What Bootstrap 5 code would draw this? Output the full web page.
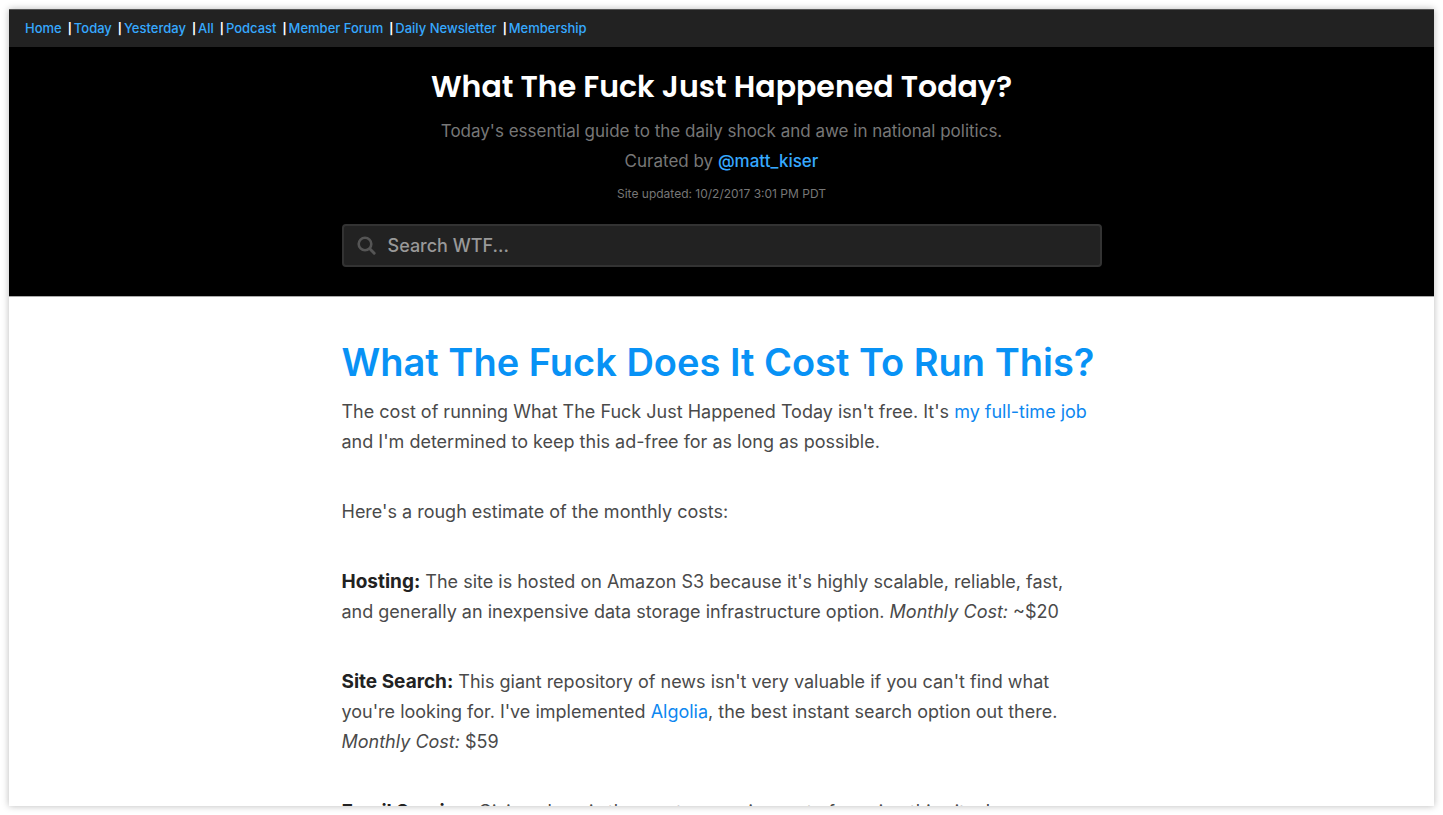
<!DOCTYPE html>
<html lang="en">
<head>
<meta charset="utf-8">
<meta name="viewport" content="width=device-width, initial-scale=1">
<title>What The Fuck Just Happened Today?</title>
<link href="https://cdn.jsdelivr.net/npm/bootstrap@5.3.0/dist/css/bootstrap.min.css" rel="stylesheet">
<style>
body{font-family:Inter,"Liberation Sans",sans-serif;background:#fff}
.stage{padding:9px}
.window{background:#fff;box-shadow:0 0 7px rgba(0,0,0,.28)}
a{text-decoration:none}
.topbar{background:#222;border-top:1px solid #555;font-size:13px;line-height:21px;padding:8px 16px;font-weight:500}
.topbar a,.masthead a{color:#36a9ff;font-weight:500}
.topbar li+li::before{content:"|";color:#fff;font-size:11px;font-weight:700;line-height:1;margin:0 2px 0 6px}
.masthead{background:#000;color:#777;border-bottom:1px solid #aaa;padding:20px 16px 29px}
.brand{font-family:Poppins,Inter,sans-serif;font-size:30px;line-height:40px;font-weight:600;color:#fff;margin-bottom:9px}
.tagline{font-size:17px;line-height:30px}
.updated{font-size:12px;line-height:20px;margin:8px 0 20px}
.column{max-width:760px}
.search-box{background:#222;border:2px solid #333;border-radius:4px;height:43px;color:#555;padding:0 13px;gap:12px}
.search-box input{color:#999;font-size:18px;font-weight:500;outline:0}
.search-box input::placeholder{color:#999;opacity:1}
.article{padding-top:40px;font-size:18px;line-height:30px;color:#4a4a4a}
.article h1{color:#0892f5;font-size:38px;line-height:50px;font-weight:600;margin-bottom:10px}
.article a{color:#0d87f0}
.article p{margin-bottom:40px;padding-right:8px}
.article strong{color:#222;font-weight:700;font-size:19px;line-height:1}
</style>
</head>
<body class="vh-100 overflow-hidden">
<div class="stage h-100">
<div class="window h-100 overflow-hidden">
<nav class="topbar" aria-label="Main">
<ul class="list-unstyled d-flex m-0">
<li><a href="#">Home</a></li><li><a href="#">Today</a></li><li><a href="#">Yesterday</a></li><li><a href="#">All</a></li><li><a href="#">Podcast</a></li><li><a href="#">Member Forum</a></li><li><a href="#">Daily Newsletter</a></li><li><a href="#">Membership</a></li>
</ul>
</nav>
<header class="masthead text-center">
<div class="brand">What The Fuck Just Happened Today?</div>
<p class="tagline m-0">Today's essential guide to the daily shock and awe in national politics.</p>
<p class="tagline m-0">Curated by <a href="#">@matt_kiser</a></p>
<p class="updated">Site updated: 10/2/2017 3:01 PM PDT</p>
<form class="column search-box mx-auto d-flex align-items-center" role="search">
<svg width="19" height="19" viewBox="0 0 19 19" fill="none" stroke="currentColor" aria-hidden="true"><circle cx="8" cy="8" r="6.3" stroke-width="2.6"/><path d="M12.8 12.8l4.4 4.4" stroke-width="2.9" stroke-linecap="round"/></svg>
<input class="border-0 bg-transparent flex-grow-1 p-0" type="text" placeholder="Search WTF..." aria-label="Search WTF">
</form>
</header>
<main class="article column mx-auto">
<h1>What The Fuck Does It Cost To Run This?</h1>
<p>The cost of running What The Fuck Just Happened Today isn't free. It's <a href="#">my full-time job</a> and I'm determined to keep this ad-free for as long as possible.</p>
<p>Here's a rough estimate of the monthly costs:</p>
<p><strong>Hosting:</strong> The site is hosted on Amazon S3 because it's highly scalable, reliable, fast, and generally an inexpensive data storage infrastructure option. <em>Monthly Cost:</em> ~$20</p>
<p><strong>Site Search:</strong> This giant repository of news isn't very valuable if you can't find what you're looking for. I've implemented <a href="#">Algolia</a>, the best instant search option out there. <em>Monthly Cost:</em> $59</p>
<p><strong>Email Service:</strong> Giving alone is the most expensive part of running this site. I</p>
</main>
</div>
</div>
<script src="https://cdn.jsdelivr.net/npm/bootstrap@5.3.0/dist/js/bootstrap.bundle.min.js"></script>
</body>
</html>
